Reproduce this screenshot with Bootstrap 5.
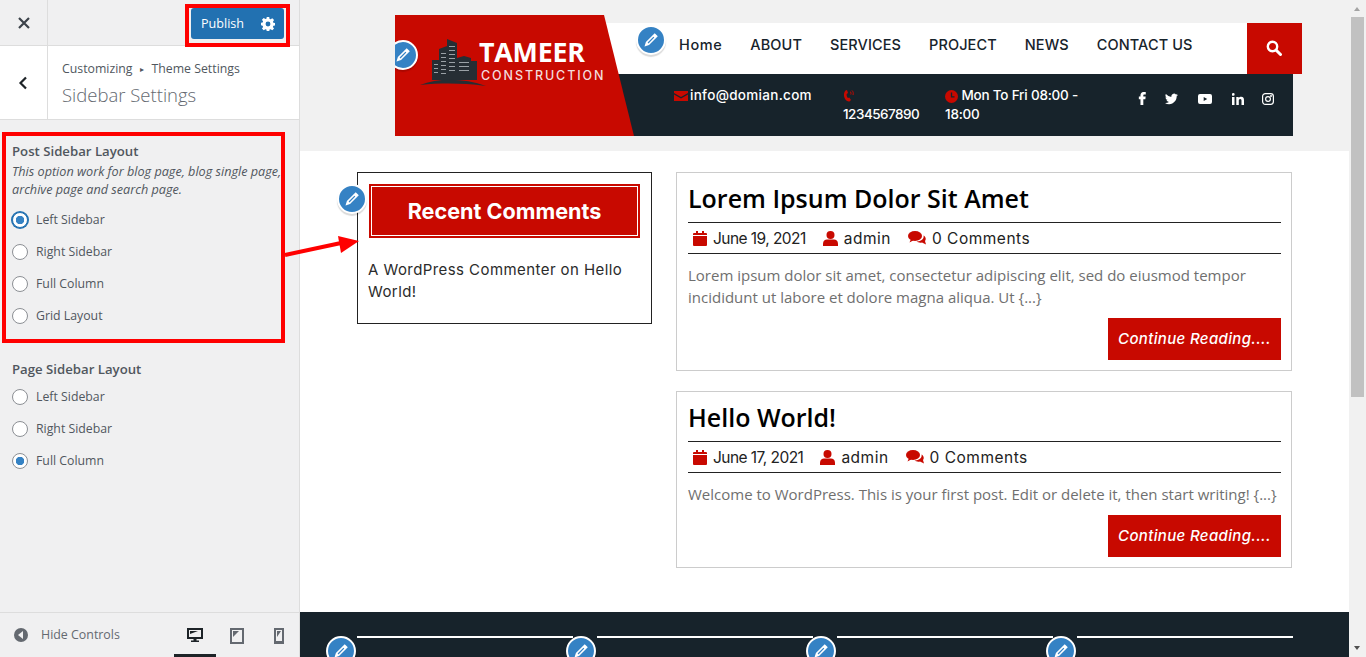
<!DOCTYPE html>
<html lang="en"><head><meta charset="utf-8"><title>Customizer</title>
<link href="https://cdn.jsdelivr.net/npm/bootstrap@5.3.0/dist/css/bootstrap.min.css" rel="stylesheet">
<style>
html,body{height:657px;overflow:hidden;margin:0}
body{font-family:"Open Sans","Liberation Sans",sans-serif;background:#fff;position:relative}
.shell{height:657px}
.cz{width:300px;flex:none;background-color:#f0f0f1;background-image:radial-gradient(#e9e9ea .6px,transparent .7px);background-size:4px 4px;border-right:1px solid #ddd;color:#50575e;font-size:13px}
.cz-top{height:46px;border-bottom:1px solid #ddd}
.cz-x{width:48px;border-right:1px solid #ddd;color:#3c434a}
.pub{margin:8px 15px 0 0;width:93px;height:31px;background:#2271b1;color:#fff;font-size:12.6px;border:0;border-radius:3px;padding:1px 9px 0 10px;display:flex;align-items:center;justify-content:space-between}
.cz-head{height:74px;background:#fff;border-bottom:1px solid #ddd}
.cz-back{width:48px;border-right:1px solid #ddd;padding-right:2px}
.crumb{font-size:12.3px;line-height:18px;color:#50575e;margin:14px 0 0 14px}
.crumb i{font-style:normal;font-size:8px;margin:0 7.5px;vertical-align:1px}
.sect{font-size:18.5px;font-weight:300;line-height:26px;color:#646970;margin:4px 0 0 14px}
.ctl{padding:22px 0 0 12px;height:492px}
.ctl-t{font-weight:600;font-size:13.2px;line-height:18px;margin:0 0 2px}
.ctl-d{font-style:italic;font-size:12.65px;line-height:18px;white-space:nowrap;overflow:hidden;width:269px;margin-bottom:6px}
.ctl-o{height:32px;gap:8px;font-size:12.3px;margin:0}
.ctl-o .form-check-input{width:16px;height:16px;margin:0;flex:none;border:1px solid #8c8f94;background-color:#fff;float:none}
.ctl-o .form-check-input:checked{border-color:#8c8f94;background-color:#fff;background-image:radial-gradient(circle,#3582c4 0 4px,transparent 4.5px)}
.ctl-o .foc:checked{border-color:#2271b1;box-shadow:0 0 0 1px #2271b1}
.gap-sec{height:28px}
.ctl-t2{margin-bottom:3px}
.cz-foot{height:45px;border-top:1px solid #ddd;padding:1px 0 0 14px;position:relative}
.hide-l{font-size:12.4px;color:#646970;gap:13px}
.dev{position:absolute;top:0;left:174px;display:flex}
.dev span{width:42px;height:45px;display:flex;align-items:center;justify-content:center}
.dev .on{border-bottom:4px solid #1d2327;padding-top:4px}
.view{width:1049px;flex:none;overflow:hidden;height:657px}
.bar{width:17px;flex:none;background:#f1f1f1;height:657px;position:relative;padding:17px 2px 0}
.thumb{height:380px;background:#c1c1c1}
.aup,.adn{position:absolute;left:5px;width:0;height:0;border-left:3.5px solid transparent;border-right:3.5px solid transparent}
.aup{top:7px;border-bottom:4px solid #a3a3a3}
.adn{top:646px;border-top:4px solid #505050}
.hdr{background:#f1f1f1;height:151px;padding:15px 0 0 95px}
.hdr-in{width:898px;height:121px}
.logo-c{width:239px;height:121px;flex:none;background:#c80900;clip-path:polygon(0 0,209px 0,239px 100%,0 100%);position:relative;z-index:2;color:#fff}
.logo-a{position:absolute;left:25px;top:23px}
.logo-b{position:absolute;left:84px;top:19px;font-family:"Open Sans",sans-serif;font-weight:700;font-size:26.8px;line-height:36px;letter-spacing:-.2px}
.logo-s{position:absolute;left:86px;top:53px;font-family:Inter,sans-serif;font-weight:500;font-size:12.5px;line-height:16px;letter-spacing:1.9px;color:#f3dcdc;white-space:nowrap}
.hdr-r{margin-left:-30px;width:689px;flex:none;position:relative;font-family:Inter,sans-serif}
.nav-w{height:51px;margin-top:8px;width:698px;background:#fff;padding-left:75px;position:relative}
.nav-w a{font-size:14.5px;font-weight:500;color:#17232b;text-decoration:none;margin-right:28px;line-height:44px;letter-spacing:.1px;padding:0}
.nav-w a:first-of-type{letter-spacing:.6px}
.srch{position:absolute;right:0;top:0;width:55px;height:51px;background:#c80900;display:flex;align-items:center;justify-content:center;padding:0 2px 2px 0}
.dk{height:62px;background:#17232b;color:#fff;padding:12px 0 0 70px;font-size:13.5px;font-weight:500;line-height:19px;position:relative}
.c1{width:169px;letter-spacing:.3px}.c2{width:102px;letter-spacing:-.5px}.c3{width:160px;letter-spacing:-.2px}
.c1 svg{margin-right:2px}
.soc{position:absolute;left:522px;top:18px;display:flex;align-items:center}
.soc span{display:flex;justify-content:center;width:33px}
.mainw{height:461px;padding:21px 0 0 57px;gap:24px;font-family:Inter,sans-serif}
.wdg{width:295px;height:152px;border:1px solid #222;padding:11px;border-radius:0}
.wdg-t{height:54px;background:#c80900;border:2px solid #c80900;outline:1px solid #fff;outline-offset:-3px;color:#fff;font-size:21.6px;font-weight:700;margin:0;text-align:center;line-height:50px;font-family:Inter,sans-serif}
.wdg-p{font-size:15px;letter-spacing:.43px;line-height:22px;color:#2b2b2b;margin:21px 0 0 -1px;font-weight:400}
.posts{width:616px;gap:20px}
.pst{border:1px solid #ccc;border-radius:0;padding:9px 10px 10px 11px}
.pst-h{font-family:"Open Sans",sans-serif;font-size:25px;font-weight:600;line-height:33px;color:#000;margin:0 0 7px}
.pst-m{border-top:1px solid #222;border-bottom:1px solid #222;height:32px;padding:1px 0 0 5px;font-size:15.5px;letter-spacing:.5px;color:#222;gap:17px}
.pst-m span{display:flex;align-items:center;gap:6px}
.pst-m span:first-child{letter-spacing:-.55px}
.pst-t{font-family:"Open Sans",sans-serif;font-size:15px;line-height:22px;color:#6f6f6f;margin:10px 0 10px}
.more{display:block;margin-left:auto;width:173px;height:42px;background:#c80900;color:#fff;font-style:italic;font-weight:500;font-size:15px;letter-spacing:.35px;border:0;border-radius:0;padding:0}
.ftr{height:45px;background:#17232b;padding:24px 0 0 57px;gap:24px}
.ftr-c{width:216px;height:2px;background:#fff;position:relative}
.pen{position:absolute;width:30px;height:30px;border-radius:50%;background:#3582c4;border:2px solid #fff;box-shadow:0 2px 1px rgba(0,0,0,.15);display:flex;align-items:center;justify-content:center;z-index:3}
.p-logo{left:-7px;top:25px}.p-nav{left:32px;top:2px}.p-wdg{left:-21px;top:11px}.p-ftr{left:-31px;top:0}
.note{position:absolute;border:4px solid #f00;z-index:5}
.n1{left:185px;top:4px;width:105px;height:43px}
.n2{left:2px;top:132px;width:283px;height:211px}
.arw{position:absolute;left:284px;top:232px;z-index:5}
</style></head><body>
<svg width="0" height="0" class="position-absolute"><defs>
 <symbol id="pencil" viewBox="0 0 16 16"><path fill="#fff" fill-rule="evenodd" d="M11.700 1.200l3.100 3.100-8.800 8.800L1.500 14.500l1.400-4.500zM10.400 4.700L4.600 10.500l.9.900 5.800-5.800z"/></symbol>
 <symbol id="cal" viewBox="0 0 14 15"><path fill="#c80900" d="M0 5h14v9a1 1 0 0 1-1 1H1a1 1 0 0 1-1-1zM1 2h2V0h2v2h4V0h2v2h2a1 1 0 0 1 1 1v1H0V3a1 1 0 0 1 1-1z"/></symbol>
 <symbol id="usr" viewBox="0 0 15 15"><circle fill="#c80900" cx="7.500" cy="4" r="4"/><path fill="#c80900" d="M0 15v-2.500C0 10 2 8.500 4 8.500h7c2 0 4 1.500 4 4V15z"/></symbol>
 <symbol id="cmt" viewBox="0 0 18 15"><ellipse fill="#c80900" cx="7" cy="5" rx="7" ry="5"/><path fill="#c80900" d="M3 8L1.500 11.500 6 9z"/><path fill="#c80900" d="M15.500 4.500c2 1 3 3.500 1.500 5.500l1 3.500-4-2c-2 .5-4 0-5.500-1 4 .5 8-2.500 7-6z"/></symbol>
</defs></svg>
<div class="shell d-flex">
 <aside class="cz d-flex flex-column">
  <div class="cz-top d-flex justify-content-between">
   <div class="cz-x d-flex align-items-center justify-content-center"><svg width="12" height="12" viewBox="0 0 12 12"><path d="M1 1l10 10M11 1L1 11" stroke="#3c434a" stroke-width="2.200"/></svg></div>
   <button class="pub" type="button">Publish <svg width="14" height="14" viewBox="0 0 16 16" fill="#fff"><path fill-rule="evenodd" d="M6.600 0h2.800l.4 2.200 1.200.5L12.900 1.400l2 2-1.300 1.900.5 1.200 2.200.4v2.800l-2.200.4-.5 1.200 1.300 1.900-2 2-1.900-1.300-1.200.5-.4 2.200H6.600l-.4-2.200-1.200-.5-1.900 1.300-2-2 1.300-1.900-.5-1.200L-.3 9.400V6.600l2.200-.4.500-1.200L1.100 3.100l2-2L5 2.400l1.200-.5zM8 5.200a2.800 2.800 0 1 0 0 5.600 2.800 2.800 0 0 0 0-5.600z"/></svg></button>
  </div>
  <div class="cz-head d-flex">
   <div class="cz-back d-flex align-items-center justify-content-center"><svg width="10" height="14" viewBox="0 0 10 14"><path d="M8 1.500L2.500 7 8 12.500" fill="none" stroke="#1d2327" stroke-width="2.200"/></svg></div>
   <div class="ms-0"><div class="crumb">Customizing<i>▸</i>Theme Settings</div><div class="sect">Sidebar Settings</div></div>
  </div>
  <div class="ctl">
   <div class="ctl-t">Post Sidebar Layout</div>
   <div class="ctl-d">This option work for blog page, blog single page,<br>archive page and search page.</div>
   <label class="ctl-o d-flex align-items-center"><input class="form-check-input foc" type="radio" name="a" checked>Left Sidebar</label>
   <label class="ctl-o d-flex align-items-center"><input class="form-check-input" type="radio" name="a">Right Sidebar</label>
   <label class="ctl-o d-flex align-items-center"><input class="form-check-input" type="radio" name="a">Full Column</label>
   <label class="ctl-o d-flex align-items-center"><input class="form-check-input" type="radio" name="a">Grid Layout</label>
   <div class="gap-sec"></div>
   <div class="ctl-t ctl-t2">Page Sidebar Layout</div>
   <label class="ctl-o d-flex align-items-center"><input class="form-check-input" type="radio" name="b">Left Sidebar</label>
   <label class="ctl-o d-flex align-items-center"><input class="form-check-input" type="radio" name="b">Right Sidebar</label>
   <label class="ctl-o d-flex align-items-center"><input class="form-check-input" type="radio" name="b" checked>Full Column</label>
  </div>
  <div class="cz-foot d-flex align-items-center">
   <span class="hide-l d-flex align-items-center"><svg width="14" height="14" viewBox="0 0 14 14"><circle cx="7" cy="7" r="7" fill="#646970"/><path d="M9 3v8L4 7z" fill="#f0f0f1"/></svg>Hide Controls</span>
   <div class="dev">
    <span class="on"><svg width="16" height="15" viewBox="0 0 16 15"><path fill="#1d2327" fill-rule="evenodd" d="M0 0h16v11H9.500v1.500H12V14H4v-1.500h2.500V11H0zM2 2v7h12V2z"/><path fill="#1d2327" d="M3 3h8L3 6z"/></svg></span>
    <span><svg width="14" height="16" viewBox="0 0 14 16"><path fill="#646970" fill-rule="evenodd" d="M0 0h14v16H0zM2 2v12h10V2z"/><path fill="#646970" d="M3 3h6L3 9z"/></svg></span>
    <span><svg width="10" height="16" viewBox="0 0 10 16"><path fill="#646970" fill-rule="evenodd" d="M0 0h10v16H0zM2 2v11h6V2z"/><path fill="#646970" d="M3 3h4L3 9z"/></svg></span>
   </div>
  </div>
 </aside>
 <div class="view">
  <header class="hdr">
   <div class="hdr-in d-flex">
    <div class="logo-c">
     <svg class="logo-a" width="66" height="48" viewBox="0 0 66 48"><g fill="#262e34"><path d="M12 22h8v20h-8zM19 11l8-3v34h-8zM27 1l10 4v37H27zM37 20l7-2 7 2v22H37zM51 23h6v19h-6z"/><path d="M0 47c18-7 44-7 66 1-24-3-44-3-66-1z"/></g><g fill="#9aa1a6"><path d="M21 15h5v1h-5zM21 19h5v1h-5zM21 23h5v1h-5zM21 27h5v1h-5zM21 31h5v1h-5zM21 35h5v1h-5zM29 8h6v1h-6zM29 12h6v1h-6zM29 16h6v1h-6zM29 20h6v1h-6zM29 24h6v1h-6zM29 28h6v1h-6zM29 32h6v1h-6zM39 24h10v1H39zM39 28h10v1H39zM39 32h10v1H39zM14 26h4v1h-4zM14 30h4v1h-4zM14 34h4v1h-4z"/></g></svg>
     <div class="logo-b">TAMEER</div><div class="logo-s">CONSTRUCTION</div>
     <span class="pen p-logo"><svg width="16" height="16"><use href="#pencil"/></svg></span>
    </div>
    <div class="hdr-r">
     <nav class="nav-w d-flex align-items-start">
      <span class="pen p-nav"><svg width="16" height="16"><use href="#pencil"/></svg></span>
      <a class="nav-link" href="#">Home</a><a class="nav-link" href="#">ABOUT</a><a class="nav-link" href="#">SERVICES</a><a class="nav-link" href="#">PROJECT</a><a class="nav-link" href="#">NEWS</a><a class="nav-link" href="#">CONTACT US</a>
      <div class="srch"><svg width="16" height="16" viewBox="0 0 16 16"><circle cx="6.500" cy="6.500" r="4.700" fill="none" stroke="#fff" stroke-width="2.400"/><path d="M10 10l4.500 4.500" stroke="#fff" stroke-width="3" stroke-linecap="round"/></svg></div>
     </nav>
     <div class="dk d-flex">
      <div class="c1"><svg width="14" height="10" viewBox="0 0 14 10"><path fill="#c80900" d="M0 0h14v2L7 6 0 2zM0 3.500l7 4 7-4V10H0z"/></svg>info@domian.com</div>
      <div class="c2"><svg width="11" height="14" viewBox="0 0 11 13"><path fill="#c80900" d="M2.500 1L4 .5l1 3-1.300 1c-.3 1.500.2 3 1.300 4l1.300-.6L8 10.500l-1.500 1.500C3 12.500.5 8 1 4.500 1.200 3 1.800 1.700 2.500 1z"/><path d="M7 2c1 .5 1.200 2 .8 3M9 1c1.300 1 1.500 3 1 4.500" stroke="#c80900" fill="none"/></svg><br>1234567890</div>
      <div class="c3"><svg width="13" height="13" viewBox="0 0 13 13"><circle cx="6.500" cy="6.500" r="6.500" fill="#c80900"/><path d="M6.500 2.500v4.300h3" stroke="#17232b" stroke-width="1.300" fill="none"/></svg> Mon To Fri 08:00 - 18:00</div>
      <div class="soc">
       <span><svg width="9" height="13" viewBox="3 0 10 16" fill="#fff"><path d="M9 5.500V4c0-.6.4-.8.8-.8H12V0H9C7 0 5.500 1.600 5.500 4v1.500H3.500V9h2v7H9V9h2.500l.4-3.500z"/></svg></span>
       <span style="width:25px"><svg width="13" height="13" viewBox="0 0 16 16" fill="#fff"><path d="M5.026 15c6.038 0 9.341-5.003 9.341-9.334 0-.14 0-.282-.006-.422A6.685 6.685 0 0 0 16 3.542a6.658 6.658 0 0 1-1.889.518 3.301 3.301 0 0 0 1.447-1.817 6.533 6.533 0 0 1-2.087.793A3.286 3.286 0 0 0 7.875 6.030a9.325 9.325 0 0 1-6.767-3.429 3.289 3.289 0 0 0 1.018 4.382A3.323 3.323 0 0 1 .64 6.575v.045a3.288 3.288 0 0 0 2.632 3.218 3.203 3.203 0 0 1-.865.115 3.230 3.230 0 0 1-.614-.057 3.283 3.283 0 0 0 3.067 2.277A6.588 6.588 0 0 1 .78 13.580a6.320 6.320 0 0 1-.78-.045A9.344 9.344 0 0 0 5.026 15z"/></svg></span>
       <span style="width:41px"><svg width="14" height="10" viewBox="0 0 14 10"><path fill="#fff" fill-rule="evenodd" d="M2 0h10a2 2 0 0 1 2 2v6a2 2 0 0 1-2 2H2a2 2 0 0 1-2-2V2a2 2 0 0 1 2-2zm3.700 3v4l3.500-2z"/></svg></span>
       <span style="width:25px"><svg width="12" height="12" viewBox="0 0 12 12" fill="#fff"><rect x="0" y="4" width="2.500" height="8"/><circle cx="1.250" cy="1.400" r="1.400"/><path d="M4.300 4h2.400v1.100C7.200 4.300 8.100 3.800 9.200 3.800c2.200 0 2.800 1.400 2.800 3.400V12H9.500V7.800c0-1-.3-1.800-1.300-1.800S6.800 6.800 6.800 7.800V12H4.300z"/></svg></span>
       <span style="width:35px"><svg width="12" height="12" viewBox="0 0 12 12" fill="none" stroke="#fff" stroke-width="1.200"><rect x=".6" y=".6" width="10.800" height="10.800" rx="2.800"/><circle cx="6" cy="6" r="2.400"/><circle cx="9" cy="3" r=".4" fill="#fff"/></svg></span>
      </div>
     </div>
    </div>
   </div>
  </header>
  <main class="mainw d-flex align-items-start">
   <section class="card wdg position-relative">
    <span class="pen p-wdg"><svg width="16" height="16"><use href="#pencil"/></svg></span>
    <h2 class="wdg-t">Recent Comments</h2>
    <p class="wdg-p">A WordPress Commenter on Hello World!</p>
   </section>
   <div class="posts d-flex flex-column">
    <article class="card pst">
     <h1 class="pst-h">Lorem Ipsum Dolor Sit Amet</h1>
     <div class="pst-m d-flex align-items-center">
      <span><svg width="14" height="15"><use href="#cal"/></svg>June 19, 2021</span>
      <span><svg width="15" height="15"><use href="#usr"/></svg>admin</span>
      <span><svg width="18" height="15"><use href="#cmt"/></svg>0 Comments</span>
     </div>
     <p class="pst-t">Lorem ipsum dolor sit amet, consectetur adipiscing elit, sed do eiusmod tempor incididunt ut labore et dolore magna aliqua. Ut {...}</p>
     <button class="btn more" type="button">Continue Reading....</button>
    </article>
    <article class="card pst">
     <h1 class="pst-h">Hello World!</h1>
     <div class="pst-m d-flex align-items-center">
      <span><svg width="14" height="15"><use href="#cal"/></svg>June 17, 2021</span>
      <span><svg width="15" height="15"><use href="#usr"/></svg>admin</span>
      <span><svg width="18" height="15"><use href="#cmt"/></svg>0 Comments</span>
     </div>
     <p class="pst-t">Welcome to WordPress. This is your first post. Edit or delete it, then start writing! {...}</p>
     <button class="btn more" type="button">Continue Reading....</button>
    </article>
   </div>
  </main>
  <footer class="ftr d-flex">
   <div class="ftr-c"><span class="pen p-ftr"><svg width="16" height="16"><use href="#pencil"/></svg></span></div>
   <div class="ftr-c"><span class="pen p-ftr"><svg width="16" height="16"><use href="#pencil"/></svg></span></div>
   <div class="ftr-c"><span class="pen p-ftr"><svg width="16" height="16"><use href="#pencil"/></svg></span></div>
   <div class="ftr-c"><span class="pen p-ftr"><svg width="16" height="16"><use href="#pencil"/></svg></span></div>
  </footer>
 </div>
 <div class="bar"><span class="aup"></span><div class="thumb"></div><span class="adn"></span></div>
</div>
<div class="note n1"></div>
<div class="note n2"></div>
<svg class="arw" width="76" height="28" viewBox="0 0 76 28"><path d="M1 23l56-12" stroke="#f00" stroke-width="4"/><path d="M75 9L54 4l3 17z" fill="#f00"/></svg>
</body></html>
